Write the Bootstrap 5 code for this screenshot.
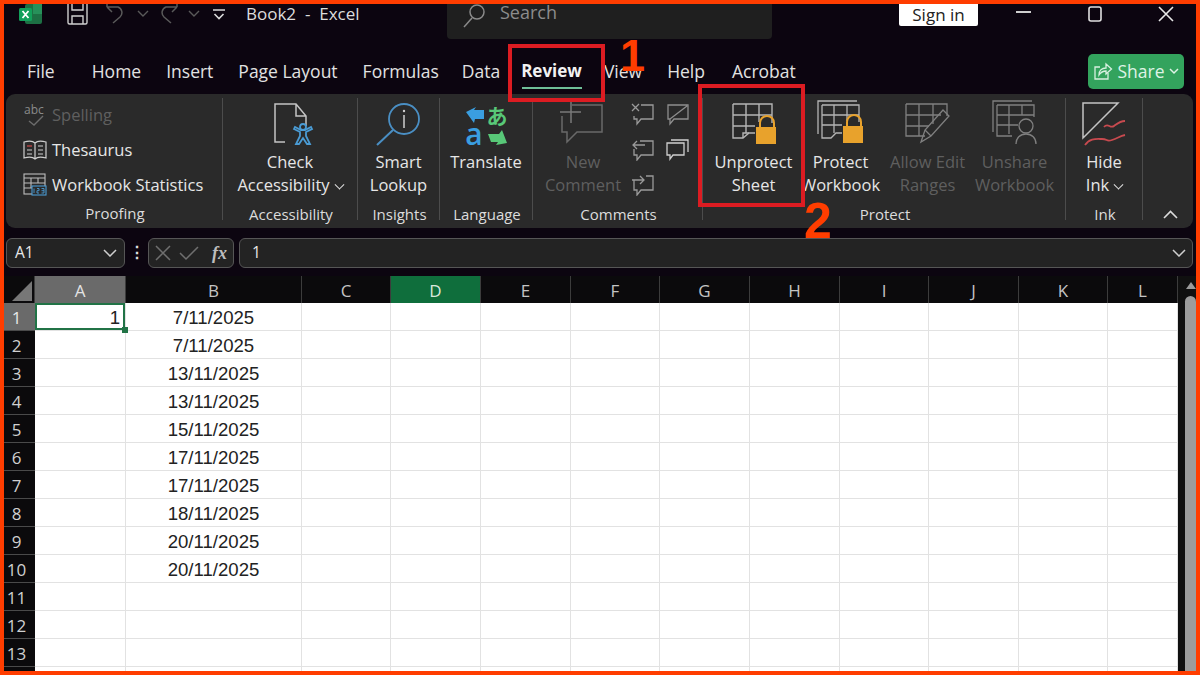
<!DOCTYPE html>
<html lang="en">
<head>
<meta charset="utf-8">
<title>Book2 - Excel</title>
<link href="https://cdn.jsdelivr.net/npm/bootstrap@5.3.0/dist/css/bootstrap.min.css" rel="stylesheet">
<style>
html,body{margin:0;height:675px;width:1200px;overflow:hidden;background:#ff3d00}
body{font-family:"Open Sans","Noto Sans",sans-serif;color:#e6e6e6}
.frame{position:relative;width:1200px;height:675px;padding:4px;background:#ff3d00}
.app{width:1192px;height:667px;background:#0c0510}
svg{display:block;flex:none}
.titlebar{height:38px;font-size:17px;color:#ddd}
.logo{margin-left:15px;margin-right:25px}
.qat-gap{margin-left:18px}
.cust{margin-left:13px;margin-top:5px}
.doc-title{margin-left:21px;width:201px;white-space:pre;line-height:20px;margin-top:0}
.search-box{width:325px;height:35px;background:#1f1f1f;border-radius:0 0 4px 4px;color:#8c8c8c;padding-left:15px;gap:14px;font-size:18px;line-height:18px}
.search-box span{margin-top:-1px}
.signin{margin-left:127px;width:79px;height:22px;background:#fff;color:#222;font-size:17px;line-height:22px;text-align:center;border-radius:0 0 2px 2px}
.winbtns{margin-left:38px}
.tabbar{height:52px;padding-left:23px;padding-right:12px;font-size:17.5px;color:#e2e2e2}
.tabitem{margin-right:25px;position:relative;white-space:nowrap;margin-top:6px}
.tabitem.first{margin-right:37px}
.tabitem.t-form{margin-right:23px}
.tabitem.t-data{margin-right:21px}
.tabitem.on{font-weight:700;color:#f2f2f2;font-size:17px;margin-right:22px}
.tabitem.t-view{margin-right:25px}
.tabitem.t-help{margin-right:27px}
.tabitem.on::after{content:"";position:absolute;left:1px;right:0;bottom:-5px;height:2px;background:#6fbf98}
.sharebtn{margin-left:auto;width:96px;height:35px;background:#33a35d;border-radius:5px;font-size:17.5px;gap:4px;margin-top:6px}
.ribbon{height:134px;margin:0 3px 0 2px;background:#2a2a2a;border-radius:9px;padding-top:4px;font-size:16.5px;line-height:23px}
.rgroup{height:122px;border-right:1px solid #4c4c4c;flex:none}
.rbody{height:106px}
.rlabel{height:16px;line-height:20px;text-align:center;font-size:15px;color:#dcdcdc;white-space:nowrap;padding-left:2px}
.w1{width:217px}.w2{width:135px}.w3{width:82px}.w4{width:93px}.w5{width:170px}.w6{width:363px}.w7{width:77px}
.rowitem{height:35px;white-space:nowrap;color:#e6e6e6;padding-left:17px;gap:5px}
.rowitem.top{margin-top:-1px}
.off{color:#5f5f5f!important}
.bigbtn{display:flex;flex-direction:column;align-items:center;flex:none;white-space:nowrap;text-align:center;color:#e6e6e6}
.bigbtn .ic{height:52px;display:flex;align-items:flex-end;justify-content:center;padding-bottom:4px}
.bigbtn .ic.flush{padding-bottom:0;align-items:flex-start}
.doc-ic{margin-left:8px}
.pw{width:87px}
.pad7{padding-left:7px}
.newc{width:100px}
.cmini{display:grid;grid-template-columns:35px 35px;grid-auto-rows:35px;margin-left:-8px;margin-top:-2px;justify-items:center;align-items:center}
.caret{display:inline-block;width:7px;height:7px;border:solid currentColor;border-width:0 1.5px 1.5px 0;transform:rotate(45deg) translate(-2px,-2px);margin-left:6px}
.collapse-cell{flex:1;padding-right:15px;padding-top:112px}
.fbar{height:30px;margin-top:10px;margin-left:2px;margin-right:3px;font-size:15.5px}
.fbox{height:30px;background:#232323;border:1px solid #565656;border-radius:6px;color:#e8e8e8}
.fname{width:119px;padding:0 7px 0 8px}
.fdots{width:23px;text-align:center;font-weight:700;color:#ddd}
.ffun{width:86px;padding:0 6px;margin-right:5px;gap:8px}
.fx{font-family:"Liberation Serif",serif;font-size:18px;font-weight:700;color:#bdbdbd;margin-left:auto;line-height:1}
.ftext{flex:1;padding:0 6px 0 12px}
.sheetwrap{margin-top:8px;height:395px;overflow:hidden}
.sheetscroll{width:18px;background:#101010;position:relative;flex:none}
.sb-arrow{position:absolute;right:0;top:6px;width:0;height:0;border:5.5px solid transparent;border-bottom:7px solid #9a9a9a;border-top:0}
.sb-thumb{position:absolute;right:0;top:20px;width:11px;height:400px;background:#9c9c9c;border-radius:6px 6px 0 0}
table.gridtbl{table-layout:fixed;width:1174px;border-collapse:separate;border-spacing:0;flex:none}
.gridtbl th{background:#0b0a0c;color:#c4c4c4;font-weight:400;font-size:17px;text-align:center;height:27px;line-height:1;padding:2px 0 0;border-right:1px solid #3c3c3c}
.gridtbl thead th.hl{background:#6a6a6a;color:#e4e4e4}
.gridtbl thead th.act{background:#0f6e3c;color:#d8e8dc}
.gridtbl tbody th{height:28px;border-right:0;border-bottom:1px solid #4a4a4a;padding:1px 6px 0 0;color:#d0d0d0}
.gridtbl tbody th.hl{background:#6a6a6a;color:#e8e8e8}
.gridtbl td{height:28px;padding:3px 5px 0;background:#fff;border-right:1px solid #e2e2e2;border-bottom:1px solid #e2e2e2;color:#222;font-family:"Liberation Sans",Arial,sans-serif;font-size:18.6px;text-align:center;line-height:1}
.gridtbl td.sel{position:relative;text-align:right;box-shadow:inset 0 0 0 2px #217346}
.fillh{position:absolute;right:-3px;bottom:-3px;width:6px;height:6px;background:#217346;z-index:2}
.redbox{position:absolute;border:4px solid #dc1c22;pointer-events:none}
.rb1{left:508px;top:44px;width:97px;height:58px}
.rb2{left:698px;top:84px;width:107px;height:123px}
.stepnum{position:absolute;color:#ff3d00;font-family:"Liberation Sans",Arial,sans-serif;font-weight:700;line-height:1}
.n1{left:620px;top:33px;font-size:45px}
.n2{left:804px;top:196px;font-size:50px}
</style>
</head>
<body>
<div class="frame">
 <div class="app d-flex flex-column">

  <div class="titlebar d-flex align-items-start">
   <svg class="logo" width="23" height="21" viewBox="0 0 23 21"><rect x="6" y="0" width="17" height="20" rx="2" fill="#1d7044"/><rect x="14" y="0" width="9" height="10" fill="#27915a"/><rect x="0" y="4" width="13" height="13" rx="1.5" fill="#12a05a"/><path d="M3.500 7L9.500 14M9.500 7L3.500 14" stroke="#fff" stroke-width="1.800"/></svg>
   <svg width="21" height="21" viewBox="0 0 21 21" fill="none" stroke="#cfcfcf" stroke-width="1.4"><path d="M1 0V18.500a1.500 1.500 0 0 0 1.500 1.500H18.500a1.500 1.500 0 0 0 1.500-1.500V0"/><path d="M5 0V6H16V0M5 20V12H16V20"/></svg>
   <svg class="qat-gap" width="21" height="20" viewBox="0 0 21 20" fill="none" stroke="#5a5a5a" stroke-width="1.500"><path d="M1 3L6 8M1 3V-2M1 3H12a6 6 0 0 1 2 10L7 19"/></svg>
   <svg style="margin-left:10px;margin-top:6px" width="12" height="8" viewBox="0 0 12 8" fill="none" stroke="#5a5a5a" stroke-width="1.400"><path d="M1 1L6 6L11 1"/></svg>
   <svg style="margin-left:8px" width="21" height="20" viewBox="0 0 21 20" fill="none" stroke="#5a5a5a" stroke-width="1.500"><path d="M20 3L15 8M20 3V-2M20 3H9a6 6 0 0 0-2 10L14 19"/></svg>
   <svg style="margin-left:10px;margin-top:6px" width="12" height="8" viewBox="0 0 12 8" fill="none" stroke="#5a5a5a" stroke-width="1.400"><path d="M1 1L6 6L11 1"/></svg>
   <svg class="cust" width="12" height="11" viewBox="0 0 12 11" fill="none" stroke="#dadada" stroke-width="1.600"><path d="M0 1H12M1.500 5L6 9.500L10.500 5"/></svg>
   <div class="doc-title">Book2  -  Excel</div>
   <div class="search-box d-flex align-items-start"><svg width="24" height="24" viewBox="0 0 24 24" fill="none" stroke="#8a8a8a" stroke-width="1.500"><circle cx="15" cy="8" r="7"/><path d="M10 14L2 23"/></svg><span>Search</span></div>
   <div class="signin">Sign in</div>
   <div class="winbtns d-flex align-items-start">
    <svg style="margin-top:7px" width="15" height="3" viewBox="0 0 15 3"><rect width="15" height="2" fill="#cfcfcf"/></svg>
    <svg style="margin-left:57px;margin-top:2px" width="14" height="16" viewBox="0 0 14 16" fill="none" stroke="#e0e0e0" stroke-width="1.600"><rect x="1" y="1" width="12" height="14" rx="2"/></svg>
    <svg style="margin-left:56px;margin-top:2px" width="16" height="16" viewBox="0 0 16 16" fill="none" stroke="#e8e8e8" stroke-width="1.600"><path d="M1 1L15 15M15 1L1 15"/></svg>
   </div>
  </div>

  <div class="tabbar d-flex align-items-center">
   <div class="tabitem first">File</div>
   <div class="tabitem">Home</div>
   <div class="tabitem">Insert</div>
   <div class="tabitem">Page Layout</div>
   <div class="tabitem t-form">Formulas</div>
   <div class="tabitem t-data">Data</div>
   <div class="tabitem on">Review</div>
   <div class="tabitem t-view">View</div>
   <div class="tabitem t-help">Help</div>
   <div class="tabitem">Acrobat</div>
   <div class="sharebtn d-flex align-items-center justify-content-center">
    <svg width="20" height="20" viewBox="0 0 20 20" fill="none" stroke="#d8f0e0" stroke-width="1.300"><path d="M7 6H2V18H15V12"/><path d="M6 14C6 9 9 7 13 7V3L18.500 8L13 13V10C10 10 8 11 6 14Z"/></svg>
    <span style="color:#dff3e6">Share</span><svg width="10" height="7" viewBox="0 0 10 7" fill="none" stroke="#dff3e6" stroke-width="1.500"><path d="M1 1L5 5L9 1"/></svg>
   </div>
  </div>

  <div class="ribbon d-flex">
   <div class="rgroup w1">
    <div class="rbody">
     <div class="rowitem top off d-flex align-items-center"><svg width="24" height="30" viewBox="0 0 24 30"><text x="1" y="14" font-size="12" fill="#8a8a8a" font-family="Open Sans">abc</text><path d="M6 21L11 25L20 16" fill="none" stroke="#6c6c6c" stroke-width="1.400"/></svg><span>Spelling</span></div>
     <div class="rowitem d-flex align-items-center"><svg width="24" height="20" viewBox="0 0 24 20" fill="none" stroke="#cfcfcf" stroke-width="1.200"><path d="M12 3C10 1 5 1 1 2V18C5 17 10 17 12 19C14 17 19 17 23 18V2C19 1 14 1 12 3ZM12 3V19"/><path d="M4 6H9" stroke="#d04a4a"/><path d="M4 10H9M4 14H9M15 6H20M15 10H20M15 14H20"/></svg><span>Thesaurus</span></div>
     <div class="rowitem d-flex align-items-center"><svg width="24" height="23" viewBox="0 0 24 23" fill="none" stroke="#bdbdbd" stroke-width="1.100"><rect x="1" y="1" width="21" height="20"/><path d="M1 5H22M1 10H22M1 15H9M8 5V15M15 5V10"/><rect x="9" y="13" width="14" height="9" fill="#2a2a2a" stroke="#4a9bd4"/><path d="M11 15.500V20M14 15.500H16V17.700H14V20H16M18.500 15.500H21V20H18.500M18.500 17.700H21" stroke="#4a9bd4" stroke-width=".9"/></svg><span>Workbook Statistics</span></div>
    </div>
    <div class="rlabel">Proofing</div>
   </div>

   <div class="rgroup w2">
    <div class="rbody bigbtn">
     <div class="ic"><svg class="doc-ic" width="44" height="44" viewBox="0 0 44 44" fill="none"><path d="M13 40H3V2H24L34 14V24M24 2V14H34" stroke="#c4c4c4" stroke-width="1.500"/><g stroke="#4a9bd4" stroke-width="1.800"><circle cx="31" cy="25" r="3"/><path d="M22 27L28 30V34L24 42H27L31 36L35 42H38L34 34V30L40 27L39 25L33 28H29L23 25Z"/></g></svg></div>
     <div>Check</div><div>Accessibility<span class="caret"></span></div>
    </div>
    <div class="rlabel">Accessibility</div>
   </div>

   <div class="rgroup w3">
    <div class="rbody bigbtn">
     <div class="ic"><svg width="46" height="46" viewBox="0 0 46 46" fill="none"><circle cx="28" cy="19" r="15" stroke="#4a8fc4" stroke-width="1.800"/><path d="M17 30L1 45" stroke="#4a8fc4" stroke-width="2"/><path d="M28 15V28" stroke="#cfcfcf" stroke-width="1.500"/><circle cx="28" cy="11" r="1.200" fill="#cfcfcf"/></svg></div>
     <div>Smart</div><div>Lookup</div>
    </div>
    <div class="rlabel">Insights</div>
   </div>

   <div class="rgroup w4">
    <div class="rbody bigbtn">
     <div class="ic flush"><svg style="margin-bottom:-10px" width="46" height="62" viewBox="0 0 46 62"><path d="M3 14L13 9L11 12H21V21H12L11 25Z" fill="#3a9ee0"/><path d="M44 45L39 32L36 36H25L28 44H35L33 47Z" fill="#58c878"/><text x="11" y="47" text-anchor="middle" font-size="30" font-weight="600" fill="#3a9ee0" font-family="Open Sans">a</text><text x="34" y="26" text-anchor="middle" font-size="21" font-weight="700" fill="#58c878" font-family="Noto Sans CJK JP">あ</text></svg></div>
     <div>Translate</div>
    </div>
    <div class="rlabel">Language</div>
   </div>

   <div class="rgroup w5">
    <div class="rbody d-flex">
     <div class="bigbtn off newc">
      <div class="ic"><svg width="46" height="44" viewBox="0 0 46 44" fill="none" stroke="#696969" stroke-width="1.500"><path d="M12 3H42V30H17L7 40V30H2V14"/><path d="M0 10H21M11 0V21" stroke="#7a7a7a"/></svg></div>
      <div class="off">New</div><div class="off">Comment</div>
     </div>
     <div class="cmini">
      <svg width="24" height="24" viewBox="0 0 24 24" fill="none" stroke="#9a9a9a" stroke-width="1.300"><path d="M10 3H22V17H10L6 22V17H3V14"/><path d="M1 2L8 9M8 2L1 9"/></svg>
      <svg width="24" height="24" viewBox="0 0 24 24" fill="none" stroke="#8e8e8e" stroke-width="1.300"><path d="M2 3H22V17H8L4 22V17H2ZM4 17L21 4"/></svg>
      <svg width="24" height="24" viewBox="0 0 24 24" fill="none" stroke="#9a9a9a" stroke-width="1.300"><path d="M9 4H22V18H10L6 23V18H3V12"/><path d="M14 8H2M6 4L2 8L6 12"/></svg>
      <svg width="24" height="24" viewBox="0 0 24 24" fill="none" stroke="#cfcfcf" stroke-width="1.300"><path d="M1 6H18V18H7L4 22V18H1ZM5 3H22V15"/></svg>
      <svg width="24" height="24" viewBox="0 0 24 24" fill="none" stroke="#9a9a9a" stroke-width="1.300"><path d="M15 4H22V18H10L6 23V18H3V8"/><path d="M1 8H13M9 4L13 8L9 12"/></svg>
     </div>
    </div>
    <div class="rlabel">Comments</div>
   </div>

   <div class="rgroup w6">
    <div class="rbody d-flex pad7">
     <div class="bigbtn pw">
      <div class="ic"><svg width="46" height="44" viewBox="0 0 46 44"><g fill="none" stroke="#b5b5b5" stroke-width="1.400"><path d="M2 2H41V21M2 2V36H12L18 31H24M2 13H41M2 24H24M15 2V31M28 2V20"/><path d="M12 36V31H18"/></g><path d="M29 26V21a7 7 0 0 1 14 0V26" fill="none" stroke="#e8a22c" stroke-width="2"/><rect x="25" y="25" width="20" height="17" fill="#e8a22c"/></svg></div>
      <div>Unprotect</div><div>Sheet</div>
     </div>
     <div class="bigbtn pw">
      <div class="ic"><svg width="48" height="46" viewBox="0 0 48 46"><g fill="none" stroke="#b5b5b5" stroke-width="1.300"><path d="M1 34V1H40M5 5H42V22M5 5V38H14L19 33H25M5 15H42M5 25H25M17 5V33M30 5V21"/></g><path d="M30 27V22a7 7 0 0 1 14 0V27" fill="none" stroke="#e8a22c" stroke-width="2"/><rect x="26" y="26" width="20" height="17" fill="#e8a22c"/></svg></div>
      <div>Protect</div><div>Workbook</div>
     </div>
     <div class="bigbtn pw off">
      <div class="ic"><svg width="46" height="44" viewBox="0 0 46 44"><g fill="none" stroke="#808080" stroke-width="1.300"><path d="M1 2H42V14M1 2V34H20M1 13H36M1 24H24M14 2V34M28 2V22"/><path d="M16 40L20 28L38 8L44 14L26 34Z"/><path d="M20 28L26 34"/></g></svg></div>
      <div class="off">Allow Edit</div><div class="off">Ranges</div>
     </div>
     <div class="bigbtn pw off">
      <div class="ic"><svg width="46" height="46" viewBox="0 0 46 46"><g fill="none" stroke="#808080" stroke-width="1.300"><path d="M1 32V1H40M5 5H42V17M5 5V36H20M5 15H42M5 25H26M17 5V34M30 5V15"/><circle cx="34" cy="26" r="7"/><path d="M24 44C24 38 28 34 34 34C40 34 44 38 44 44"/></g></svg></div>
      <div class="off">Unshare</div><div class="off">Workbook</div>
     </div>
    </div>
    <div class="rlabel">Protect</div>
   </div>

   <div class="rgroup w7">
    <div class="rbody bigbtn">
     <div class="ic"><svg width="44" height="44" viewBox="0 0 44 44" fill="none"><path d="M1 36V1H36L1 36Z" stroke="#c4c4c4" stroke-width="1.500"/><path d="M22 25C26 20 28 27 32 24S38 19 43 19" stroke="#c84a4f" stroke-width="1.800"/><path d="M3 43C8 36 14 37 20 37S24 40 30 38S38 34 43 33" stroke="#c84a4f" stroke-width="1.800"/></svg></div>
     <div>Hide</div><div>Ink<span class="caret"></span></div>
    </div>
    <div class="rlabel">Ink</div>
   </div>

   <div class="collapse-cell d-flex justify-content-end align-items-start"><svg width="15" height="9" viewBox="0 0 15 9" fill="none" stroke="#dcdcdc" stroke-width="1.600"><path d="M1 8L7.500 1.500L14 8"/></svg></div>
  </div>

  <div class="fbar d-flex align-items-center">
   <div class="fbox fname d-flex align-items-center justify-content-between"><span>A1</span><svg width="14" height="8" viewBox="0 0 14 8" fill="none" stroke="#cfcfcf" stroke-width="1.500"><path d="M1 1L7 7L13 1"/></svg></div>
   <div class="fdots">⋮</div>
   <div class="fbox ffun d-flex align-items-center"><svg width="16" height="16" viewBox="0 0 16 16" fill="none" stroke="#6f6f6f" stroke-width="1.500"><path d="M1 1L15 15M15 1L1 15"/></svg><svg width="20" height="16" viewBox="0 0 20 16" fill="none" stroke="#6f6f6f" stroke-width="1.500"><path d="M1 8L7 14L19 2"/></svg><i class="fx">fx</i></div>
   <div class="fbox ftext d-flex align-items-center justify-content-between"><span>1</span><svg width="14" height="8" viewBox="0 0 14 8" fill="none" stroke="#cfcfcf" stroke-width="1.500"><path d="M1 1L7 7L13 1"/></svg></div>
  </div>

  <div class="sheetwrap d-flex">
   <table class="gridtbl">
    <colgroup><col style="width:31px"><col style="width:91px"><col style="width:176px"><col style="width:89px"><col style="width:90px"><col style="width:90px"><col style="width:89px"><col style="width:90px"><col style="width:90px"><col style="width:89px"><col style="width:90px"><col style="width:89px"><col style="width:70px"></colgroup>
    <thead><tr><th><svg class="ms-2" width="20" height="20" viewBox="0 0 20 20"><path d="M0 20L20 0V20Z" fill="#777"/></svg></th><th class="hl">A</th><th>B</th><th>C</th><th class="act">D</th><th>E</th><th>F</th><th>G</th><th>H</th><th>I</th><th>J</th><th>K</th><th>L</th></tr></thead>
    <tbody>
     <tr><th class="hl">1</th><td class="sel">1<span class="fillh"></span></td><td>7/11/2025</td><td></td><td></td><td></td><td></td><td></td><td></td><td></td><td></td><td></td><td></td></tr>
     <tr><th>2</th><td></td><td>7/11/2025</td><td></td><td></td><td></td><td></td><td></td><td></td><td></td><td></td><td></td><td></td></tr>
     <tr><th>3</th><td></td><td>13/11/2025</td><td></td><td></td><td></td><td></td><td></td><td></td><td></td><td></td><td></td><td></td></tr>
     <tr><th>4</th><td></td><td>13/11/2025</td><td></td><td></td><td></td><td></td><td></td><td></td><td></td><td></td><td></td><td></td></tr>
     <tr><th>5</th><td></td><td>15/11/2025</td><td></td><td></td><td></td><td></td><td></td><td></td><td></td><td></td><td></td><td></td></tr>
     <tr><th>6</th><td></td><td>17/11/2025</td><td></td><td></td><td></td><td></td><td></td><td></td><td></td><td></td><td></td><td></td></tr>
     <tr><th>7</th><td></td><td>17/11/2025</td><td></td><td></td><td></td><td></td><td></td><td></td><td></td><td></td><td></td><td></td></tr>
     <tr><th>8</th><td></td><td>18/11/2025</td><td></td><td></td><td></td><td></td><td></td><td></td><td></td><td></td><td></td><td></td></tr>
     <tr><th>9</th><td></td><td>20/11/2025</td><td></td><td></td><td></td><td></td><td></td><td></td><td></td><td></td><td></td><td></td></tr>
     <tr><th>10</th><td></td><td>20/11/2025</td><td></td><td></td><td></td><td></td><td></td><td></td><td></td><td></td><td></td><td></td></tr>
     <tr><th>11</th><td></td><td></td><td></td><td></td><td></td><td></td><td></td><td></td><td></td><td></td><td></td><td></td></tr>
     <tr><th>12</th><td></td><td></td><td></td><td></td><td></td><td></td><td></td><td></td><td></td><td></td><td></td><td></td></tr>
     <tr><th>13</th><td></td><td></td><td></td><td></td><td></td><td></td><td></td><td></td><td></td><td></td><td></td><td></td></tr>
     <tr><th></th><td></td><td></td><td></td><td></td><td></td><td></td><td></td><td></td><td></td><td></td><td></td><td></td></tr>
    </tbody>
   </table>
   <div class="sheetscroll"><span class="sb-arrow"></span><span class="sb-thumb"></span></div>
  </div>
 </div>

 <div class="redbox rb1"></div>
 <div class="redbox rb2"></div>
 <div class="stepnum n1">1</div>
 <div class="stepnum n2">2</div>
</div>
<script src="https://cdn.jsdelivr.net/npm/bootstrap@5.3.0/dist/js/bootstrap.bundle.min.js"></script>
</body>
</html>
